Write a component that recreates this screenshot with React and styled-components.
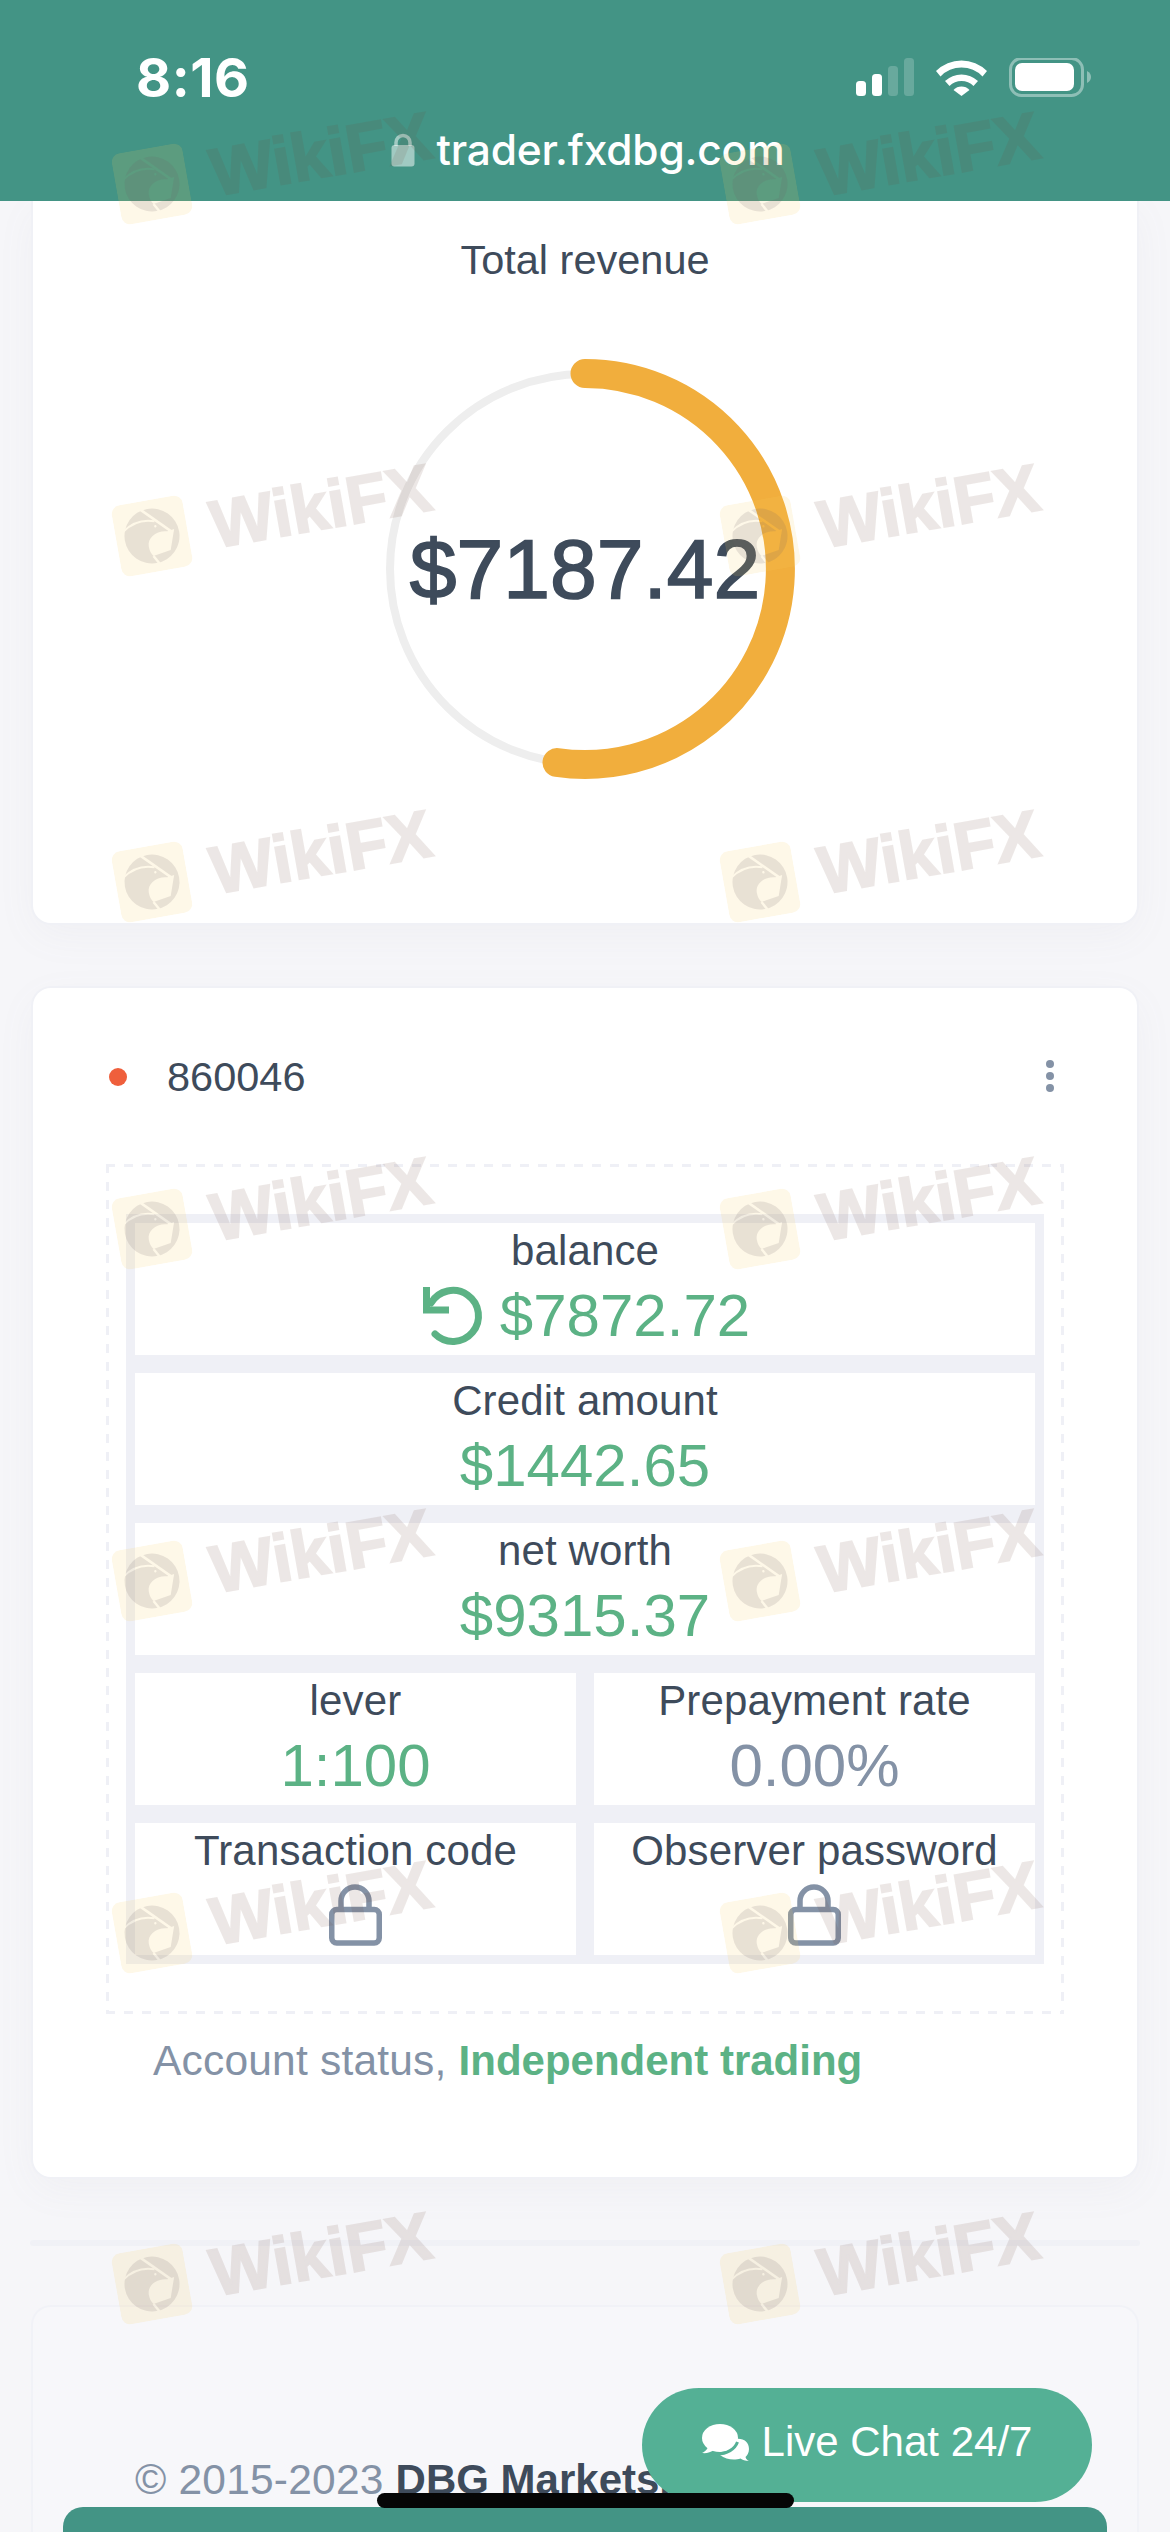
import React from 'react';
import styled, { createGlobalStyle } from 'styled-components';

const Global = createGlobalStyle`
  html, body { margin: 0; padding: 0; height: 2532px; overflow: hidden; background: #f6f6f9; }
  body { font-family: "Liberation Sans", Arial, sans-serif; color: #3e4b5b; }
  * { box-sizing: border-box; }
`;

const Page = styled.div`
  position: relative;
  width: 1170px;
  height: 2532px;
  overflow: hidden;
  display: flex;
  flex-direction: column;
`;

const Header = styled.header`
  position: relative;
  z-index: 1;
  height: 201px;
  flex: none;
  background: #439485;
  color: #fff;
  display: flex;
  flex-direction: column;
`;
const StatusRow = styled.div`
  height: 73px;
  margin-top: 41px;
  padding: 0 79px 0 136px;
  display: flex;
  align-items: center;
  justify-content: space-between;
`;
const Clock = styled.span`
  font: 700 54px/1 Inter, sans-serif;
  letter-spacing: 0.5px;
`;
const StatusIcons = styled.svg`
  width: 235px;
  height: 39px;
  display: block;
`;
const UrlRow = styled.div`
  display: flex;
  justify-content: center;
  align-items: center;
  gap: 21px;
  height: 44px;
  margin-top: 14px;
  padding-left: 6px;
`;
const UrlText = styled.span`
  font: 500 42.5px/44px Inter, sans-serif;
  letter-spacing: -0.2px;
`;

const Main = styled.main`
  padding: 0 33px;
  display: flex;
  flex-direction: column;
`;
const Card = styled.section`
  background: #fff;
  border-radius: 18px;
  box-shadow: 0 0 0 2px #f0f1f6, 0 12px 40px rgba(130, 135, 160, 0.06);
`;
const RevenueCard = styled(Card)`
  border-radius: 0 0 18px 18px;
  height: 722px;
  padding-top: 35px;
  display: flex;
  flex-direction: column;
  align-items: center;
`;
const Title = styled.div`
  font-size: 41.5px;
  line-height: 48px;
`;
const RingWrap = styled.div`
  position: relative;
  width: 440px;
  height: 440px;
  margin-top: 65px;
`;
const RingSvg = styled.svg`
  display: block;
  width: 440px;
  height: 440px;
`;
const RingAmount = styled.div`
  position: absolute;
  inset: 0;
  display: flex;
  align-items: center;
  justify-content: center;
  font-size: 84px;
  color: #3e4b5b;
  -webkit-text-stroke: 1.7px #3e4b5b;
`;
const AccountCard = styled(Card)`
  margin-top: 65px;
  height: 1189px;
  padding: 65px 73px 0;
`;
const AccountHead = styled.div`
  height: 48px;
  padding: 0 10px 0 3px;
  display: flex;
  align-items: center;
`;
const StatusDot = styled.span`
  width: 18px;
  height: 18px;
  border-radius: 50%;
  background: #ef5f3c;
  margin-right: 40px;
`;
const AccountId = styled.span`
  font-size: 41.5px;
  line-height: 48px;
  flex: 1;
`;
const MoreDots = styled.span`
  display: flex;
  flex-direction: column;
  gap: 4px;
  margin-top: -2px;
`;
const MoreDot = styled.span`
  width: 8px;
  height: 8px;
  border-radius: 50%;
  background: #8492a6;
`;
const dash = 'repeating-linear-gradient';
const Dashed = styled.div`
  margin-top: 63px;
  padding: 50px 20px;
  background:
    ${dash}(90deg, #eff0f6 0 9px, transparent 9px 18px) top left / 100% 3px no-repeat,
    ${dash}(90deg, #eff0f6 0 9px, transparent 9px 18px) bottom left / 100% 3px no-repeat,
    ${dash}(180deg, #eff0f6 0 9px, transparent 9px 18px) top left / 3px 100% no-repeat,
    ${dash}(180deg, #eff0f6 0 9px, transparent 9px 18px) top right / 3px 100% no-repeat;
`;
const Grid = styled.div`
  background: #eff0f6;
  padding: 9px;
  display: grid;
  grid-template-columns: 441px 441px;
  grid-auto-rows: 132px;
  gap: 18px;
`;
const Cell = styled.div`
  background: #fff;
  padding-top: 4px;
  grid-column: ${p => (p.$wide ? 'span 2' : 'auto')};
  display: flex;
  flex-direction: column;
  align-items: center;
`;
const Label = styled.div`
  font-size: 42px;
  letter-spacing: 0.15px;
  line-height: 48px;
  color: #3e4b5b;
`;
const Value = styled.div`
  margin-top: 8px;
  font-size: 60px;
  line-height: 66px;
  color: ${p => (p.$muted ? '#8492a6' : '#5cb285')};
  display: flex;
  align-items: center;
  gap: 16px;
`;
const RefreshSvg = styled.svg`
  width: 64px;
  height: 64px;
  display: block;
`;
const LockSvg = styled.svg`
  width: 53px;
  height: 62px;
  margin-top: 9px;
  display: block;
`;
const AccountStatus = styled.div`
  margin-top: 23px;
  padding-left: 47px;
  font-size: 42.5px;
  letter-spacing: 0.2px;
  line-height: 48px;
  color: #8492a6;
  strong { color: #5cb285; font-weight: 700; font-size: 42px; letter-spacing: 0; }
`;
const Divider = styled.div`
  margin: 63px -3px 0;
  height: 6px;
  border-radius: 3px;
  background: #f0f1f6;
`;
const FooterCard = styled.div`
  margin-top: 61px;
  height: 400px;
  border-radius: 18px;
  background: #f7f7fa;
  box-shadow: 0 0 0 2px #f1f2f7;
  padding: 149px 0 0 102px;
  font-size: 42.5px;
  letter-spacing: 0.2px;
  line-height: 48px;
  color: #8492a6;
  white-space: nowrap;
  strong { color: #3e4b5b; font-weight: 700; font-size: 42px; letter-spacing: 0; }
`;

const ChatButton = styled.div`
  position: absolute;
  left: 642px;
  top: 2388px;
  width: 450px;
  height: 114px;
  border-radius: 57px;
  background: #54b095;
  color: #fff;
  font-size: 42px;
  display: flex;
  align-items: center;
  justify-content: center;
  gap: 13px;
  padding-bottom: 6px;
`;
const ChatIcon = styled.svg`
  width: 47px;
  height: 37px;
  display: block;
`;
const BottomBar = styled.div`
  position: absolute;
  left: 63px;
  right: 63px;
  top: 2507px;
  bottom: 0;
  border-radius: 20px 20px 0 0;
  background: #439485;
`;
const HomeIndicator = styled.div`
  position: absolute;
  left: 377px;
  top: 2493px;
  width: 417px;
  height: 15px;
  border-radius: 8px;
  background: #060606;
`;
const Mark = styled.div`
  position: absolute;
  z-index: 2;
  left: ${p => p.$x - 36}px;
  top: ${p => p.$y - 36}px;
  height: 72px;
  display: flex;
  align-items: center;
  gap: 24px;
  transform: rotate(-10deg);
  transform-origin: 36px 36px;
  pointer-events: none;
`;
const MarkLogo = styled.svg`
  width: 72px;
  height: 72px;
  display: block;
`;
const MarkText = styled.span`
  font-family: "Liberation Sans", sans-serif;
  font-weight: 700;
  font-size: 67px;
  line-height: 72px;
  color: #6e4637;
  -webkit-text-stroke: 2px #6e4637;
  opacity: 0.12;
`;

const rows = [184, 536, 882, 1229, 1581, 1933, 2284];
const cols = [152, 760];

function Watermark({ x, y }) {
  const id = `eagle-${x}-${y}`;
  return (
    <Mark $x={x} $y={y}>
      <MarkLogo viewBox="0 0 72 72">
        <rect width="72" height="72" rx="9" fill="rgba(250,205,90,0.14)" />
        <mask id={id}>
          <rect width="72" height="72" fill="#fff" />
          <path d="M29 8 L57 36" stroke="#000" strokeWidth="2.5" />
          <path d="M8 27 C18 20 30 18 41 22" stroke="#000" strokeWidth="2" fill="none" />
          <path d="M52 34 C41 31 31 37 31 46 C31 50 32 53 34 56 L52 53 L59 33 Z" fill="#000" />
          <path d="M34 56 L39 65" stroke="#000" strokeWidth="2.5" />
          <circle cx="41" cy="27" r="1.2" fill="#000" />
        </mask>
        <circle cx="36" cy="36" r="27.500" fill="rgba(110,95,100,0.15)" mask={`url(#${id})`} />
      </MarkLogo>
      <MarkText>WikiFX</MarkText>
    </Mark>
  );
}

function Lock() {
  return (
    <LockSvg viewBox="0 0 53 62">
      <path d="M12 24 V17 A14 14 0 0 1 40 17 V24" fill="none" stroke="#8492a6" strokeWidth="5.500" />
      <rect x="2.750" y="25.500" width="47.500" height="33.500" rx="5" fill="none" stroke="#8492a6" strokeWidth="5.500" />
    </LockSvg>
  );
}

export default function App() {
  return (
    <Page>
      <Global />
      <Header>
        <StatusRow>
          <Clock>8:16</Clock>
          <StatusIcons viewBox="0 0 235 39">
            <rect x="0" y="23" width="10" height="15" rx="3.5" fill="#fff" />
            <rect x="16" y="16" width="10" height="22" rx="3.5" fill="#fff" />
            <rect x="32" y="8" width="10" height="30" rx="3.5" fill="rgba(255,255,255,.2)" />
            <rect x="48" y="0" width="10" height="38" rx="3.5" fill="rgba(255,255,255,.2)" />
            <path d="M80 13 A36 36 0 0 1 131 13 L126.500 18.500 A29 29 0 0 0 84.500 18.500 Z" fill="#fff" />
            <path d="M89 23 A24 24 0 0 1 122 23 L117.500 28 A17 17 0 0 0 93.500 28 Z" fill="#fff" />
            <path d="M97.500 32 A11 11 0 0 1 113.500 32 L105.500 38 Z" fill="#fff" />
            <rect x="154.500" y="0.500" width="72" height="37" rx="11" fill="none" stroke="rgba(255,255,255,.4)" strokeWidth="3" />
            <rect x="159" y="5" width="59" height="28" rx="7" fill="#fff" />
            <path d="M231 13 C234 14.500 235 17 235 19 C235 21 234 23.500 231 25 Z" fill="rgba(255,255,255,.4)" />
          </StatusIcons>
        </StatusRow>
        <UrlRow>
          <svg width="24" height="34" viewBox="0 0 24 34">
            <path d="M5 13 V9.500 A7 7 0 0 1 19 9.500 V13" fill="none" stroke="rgba(255,255,255,.5)" strokeWidth="3.500" />
            <rect x="0.500" y="12" width="23" height="21.500" rx="3" fill="rgba(255,255,255,.5)" />
          </svg>
          <UrlText>trader.fxdbg.com</UrlText>
        </UrlRow>
      </Header>
      <Main>
        <RevenueCard>
          <Title>Total revenue</Title>
          <RingWrap>
            <RingSvg viewBox="0 0 440 440">
              <circle cx="220" cy="220" r="195" fill="none" stroke="#eeeeee" strokeWidth="8" />
              <path d="M220 24.500 A195.500 195.500 0 1 1 192 413.500" fill="none" stroke="#f1ae3d" strokeWidth="29" strokeLinecap="round" />
            </RingSvg>
            <RingAmount>$7187.42</RingAmount>
          </RingWrap>
        </RevenueCard>
        <AccountCard>
          <AccountHead>
            <StatusDot />
            <AccountId>860046</AccountId>
            <MoreDots><MoreDot /><MoreDot /><MoreDot /></MoreDots>
          </AccountHead>
          <Dashed>
            <Grid>
              <Cell $wide>
                <Label>balance</Label>
                <Value>
                  <RefreshSvg viewBox="0 0 64 64">
                    <path d="M11 19 A25.500 25.500 0 1 1 15 50" fill="none" stroke="#5cb285" strokeWidth="7" strokeLinecap="round" />
                    <path d="M6.500 3 V26 H29" fill="none" stroke="#5cb285" strokeWidth="7" />
                  </RefreshSvg>
                  $7872.72
                </Value>
              </Cell>
              <Cell $wide><Label>Credit amount</Label><Value>$1442.65</Value></Cell>
              <Cell $wide><Label>net worth</Label><Value>$9315.37</Value></Cell>
              <Cell><Label>lever</Label><Value>1:100</Value></Cell>
              <Cell><Label>Prepayment rate</Label><Value $muted>0.00%</Value></Cell>
              <Cell><Label>Transaction code</Label><Lock /></Cell>
              <Cell><Label>Observer password</Label><Lock /></Cell>
            </Grid>
          </Dashed>
          <AccountStatus>Account status, <strong>Independent trading</strong></AccountStatus>
        </AccountCard>
        <Divider />
        <FooterCard>© 2015-2023 <strong>DBG Markets.</strong></FooterCard>
      </Main>
      <BottomBar />
      <ChatButton>
        <ChatIcon viewBox="0 0 47 37">
          <path d="M27 17 C38 12 47 16 47 25 C47 29 45 31.500 43.500 33 C44 35 45.500 36.500 47 37 C43 37 40.500 36 38.500 34.500 C33 36.500 24 36 18 31 C24 30 28 27 30 22 Z" fill="#fff" />
          <ellipse cx="18" cy="14" rx="18" ry="14" fill="#fff" />
          <path d="M6 22 C6 25 3 27.500 0 29 C4 29.500 9 28.500 12 26 Z" fill="#fff" />
          <path d="M15 30 C25 30 33 25 35.500 18" fill="none" stroke="#54b095" strokeWidth="3" />
        </ChatIcon>
        Live Chat 24/7
      </ChatButton>
      <HomeIndicator />
      {rows.map(y => cols.map(x => <Watermark key={`${x}-${y}`} x={x} y={y} />))}
    </Page>
  );
}
